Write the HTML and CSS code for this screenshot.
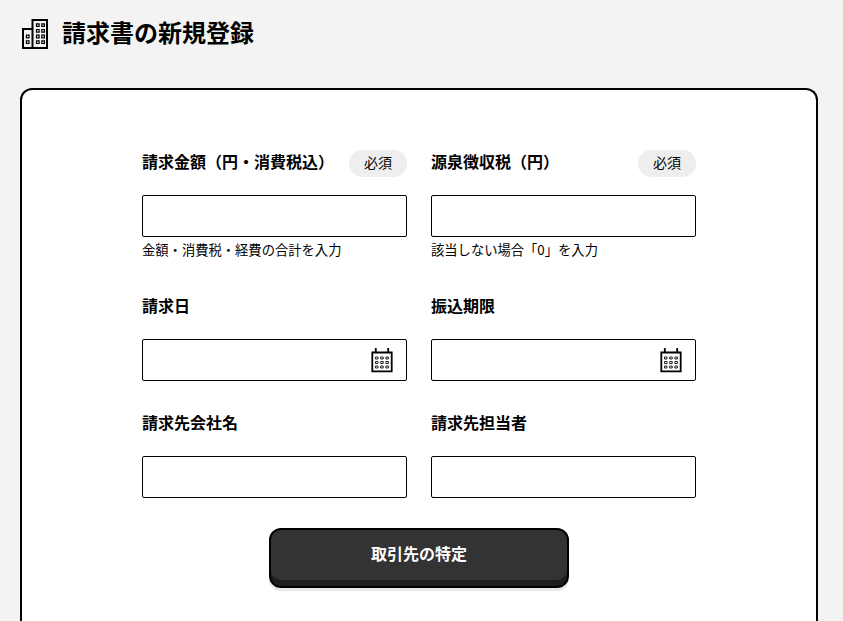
FILE: index.html
```html
<!DOCTYPE html>
<html lang="ja">
  <head>
    <meta charset="utf-8">
    <title>請求書の新規登録</title>
    <meta name="viewport" content="width=device-width, initial-scale=1">
    <link rel="stylesheet" href="styles.css">
  </head>
  <body>
    <header class="page-header">
      <svg class="page-icon" viewBox="0 0 28 32" width="28" height="32">
        <path d="M11.5 11H2V30H11.5M11.5 2H26V30H11.5Z" />
        <path class="window" d="M15.5 5.8h2.6v2.6h-2.6zM20.8 5.8h2.6v2.6h-2.6zM15.5 11.5h2.6v2.6h-2.6zM20.8 11.5h2.6v2.6h-2.6zM15.5 17.2h2.6v2.6h-2.6zM20.8 17.2h2.6v2.6h-2.6zM15.5 22.9h2.6v2.6h-2.6zM20.8 22.9h2.6v2.6h-2.6zM5.4 17.2h2.6v2.6h-2.6zM5.4 22.9h2.6v2.6h-2.6z" />
      </svg>
      <h1 class="page-title">請求書の新規登録</h1>
    </header>

    <main class="card">
      <form class="form">
        <div class="field">
          <div class="field-head">
            <label class="label" for="amount">請求金額（円・消費税込）</label>
            <span class="badge">必須</span>
          </div>
          <input class="input" id="amount" type="text">
          <p class="help">金額・消費税・経費の合計を入力</p>
        </div>
        <div class="field">
          <div class="field-head">
            <label class="label" for="tax">源泉徴収税（円）</label>
            <span class="badge">必須</span>
          </div>
          <input class="input" id="tax" type="text">
          <p class="help">該当しない場合「0」を入力</p>
        </div>

        <div class="field">
          <div class="field-head">
            <label class="label" for="date">請求日</label>
          </div>
          <div class="input input--date">
            <input class="date-text" id="date" type="text">
            <svg class="calendar" viewBox="0 0 22 25" width="22" height="25">
              <path d="M1.3 4.5H20.7V23.3H1.3ZM4.8 0V5.5M17.2 0V5.5" />
              <path class="day" d="M4.5 9h2.5v2h-2.5zM9.7 9h2.5v2h-2.5zM14.9 9h2.5v2h-2.5zM4.5 13.5h2.5v2h-2.5zM9.7 13.5h2.5v2h-2.5zM14.9 13.5h2.5v2h-2.5zM4.5 18h2.5v2h-2.5zM9.7 18h2.5v2h-2.5zM14.9 18h2.5v2h-2.5z" />
            </svg>
          </div>
        </div>
        <div class="field">
          <div class="field-head">
            <label class="label" for="limit">振込期限</label>
          </div>
          <div class="input input--date">
            <input class="date-text" id="limit" type="text">
            <svg class="calendar" viewBox="0 0 22 25" width="22" height="25">
              <path d="M1.3 4.5H20.7V23.3H1.3ZM4.8 0V5.5M17.2 0V5.5" />
              <path class="day" d="M4.5 9h2.5v2h-2.5zM9.7 9h2.5v2h-2.5zM14.9 9h2.5v2h-2.5zM4.5 13.5h2.5v2h-2.5zM9.7 13.5h2.5v2h-2.5zM14.9 13.5h2.5v2h-2.5zM4.5 18h2.5v2h-2.5zM9.7 18h2.5v2h-2.5zM14.9 18h2.5v2h-2.5z" />
            </svg>
          </div>
        </div>

        <div class="field">
          <div class="field-head">
            <label class="label" for="company">請求先会社名</label>
          </div>
          <input class="input" id="company" type="text">
        </div>
        <div class="field">
          <div class="field-head">
            <label class="label" for="person">請求先担当者</label>
          </div>
          <input class="input" id="person" type="text">
        </div>

        <button class="button" type="button">取引先の特定</button>
      </form>
    </main>
  </body>
</html>
```

FILE: styles.css
```css
* {
  box-sizing: border-box;
}
body {
  display: flex;
  flex-direction: column;
  min-height: 100vh;
  margin: 0;
  background-color: #f3f3f3;
  color: #000;
  font-family: 'Noto Sans CJK JP', sans-serif;
}
svg {
  display: block;
  fill: none;
  stroke: #000;
  stroke-width: 2px;
}
.page-header {
  display: flex;
  align-items: center;
  gap: 13px;
  height: 68px;
  margin-bottom: 20px;
  padding-left: 21px;
}
.page-icon .window {
  stroke-width: 1.2px;
}
.page-title {
  margin: 0 0 4px;
  font-size: 24px;
  line-height: 36px;
}
.card {
  flex: 1;
  margin: 0 25px 0 20px;
  padding-top: 60px;
  border: 2px solid #000;
  border-bottom: 0;
  border-radius: 12px 12px 0 0;
  background-color: #fff;
}
.form {
  display: grid;
  grid-template-columns: 265px 265px;
  gap: 30px 24px;
  width: 554px;
  margin: 0 auto;
}
.field-head {
  display: flex;
  justify-content: space-between;
  align-items: center;
  height: 27px;
  margin-bottom: 18px;
}
.label {
  margin-bottom: 5px;
  font-size: 16px;
  font-weight: bold;
  line-height: 24px;
  white-space: nowrap;
}
.badge {
  width: 58px;
  height: 27px;
  border-radius: 14px;
  background-color: #eee;
  font-size: 14px;
  line-height: 25px;
  text-align: center;
}
.input {
  display: block;
  width: 100%;
  height: 42px;
  padding: 0 13px;
  border: 1px solid #000;
  border-radius: 2px;
  background-color: #fff;
  font: inherit;
}
.input--date {
  display: flex;
  align-items: center;
}
.date-text {
  flex: 1;
  min-width: 0;
  padding: 0;
  border: 0;
  font: inherit;
}
.calendar {
  stroke-width: 1.8px;
}
.calendar .day {
  stroke: #222;
  stroke-width: 1px;
}
.help {
  height: 27px;
  margin: 0;
  font-size: 13.3px;
  line-height: 26px;
}
.button {
  grid-column: 1 / -1;
  justify-self: center;
  width: 300px;
  height: 60px;
  padding: 0 0 11px;
  border: 2px solid #000;
  border-radius: 12px;
  background-color: #333;
  box-shadow: 0 3px 0 #e8e8e8, inset 0 -6px 0 #1d1d1d;
  color: #fff;
  font: bold 16px 'Noto Sans CJK JP', sans-serif;
}
```
